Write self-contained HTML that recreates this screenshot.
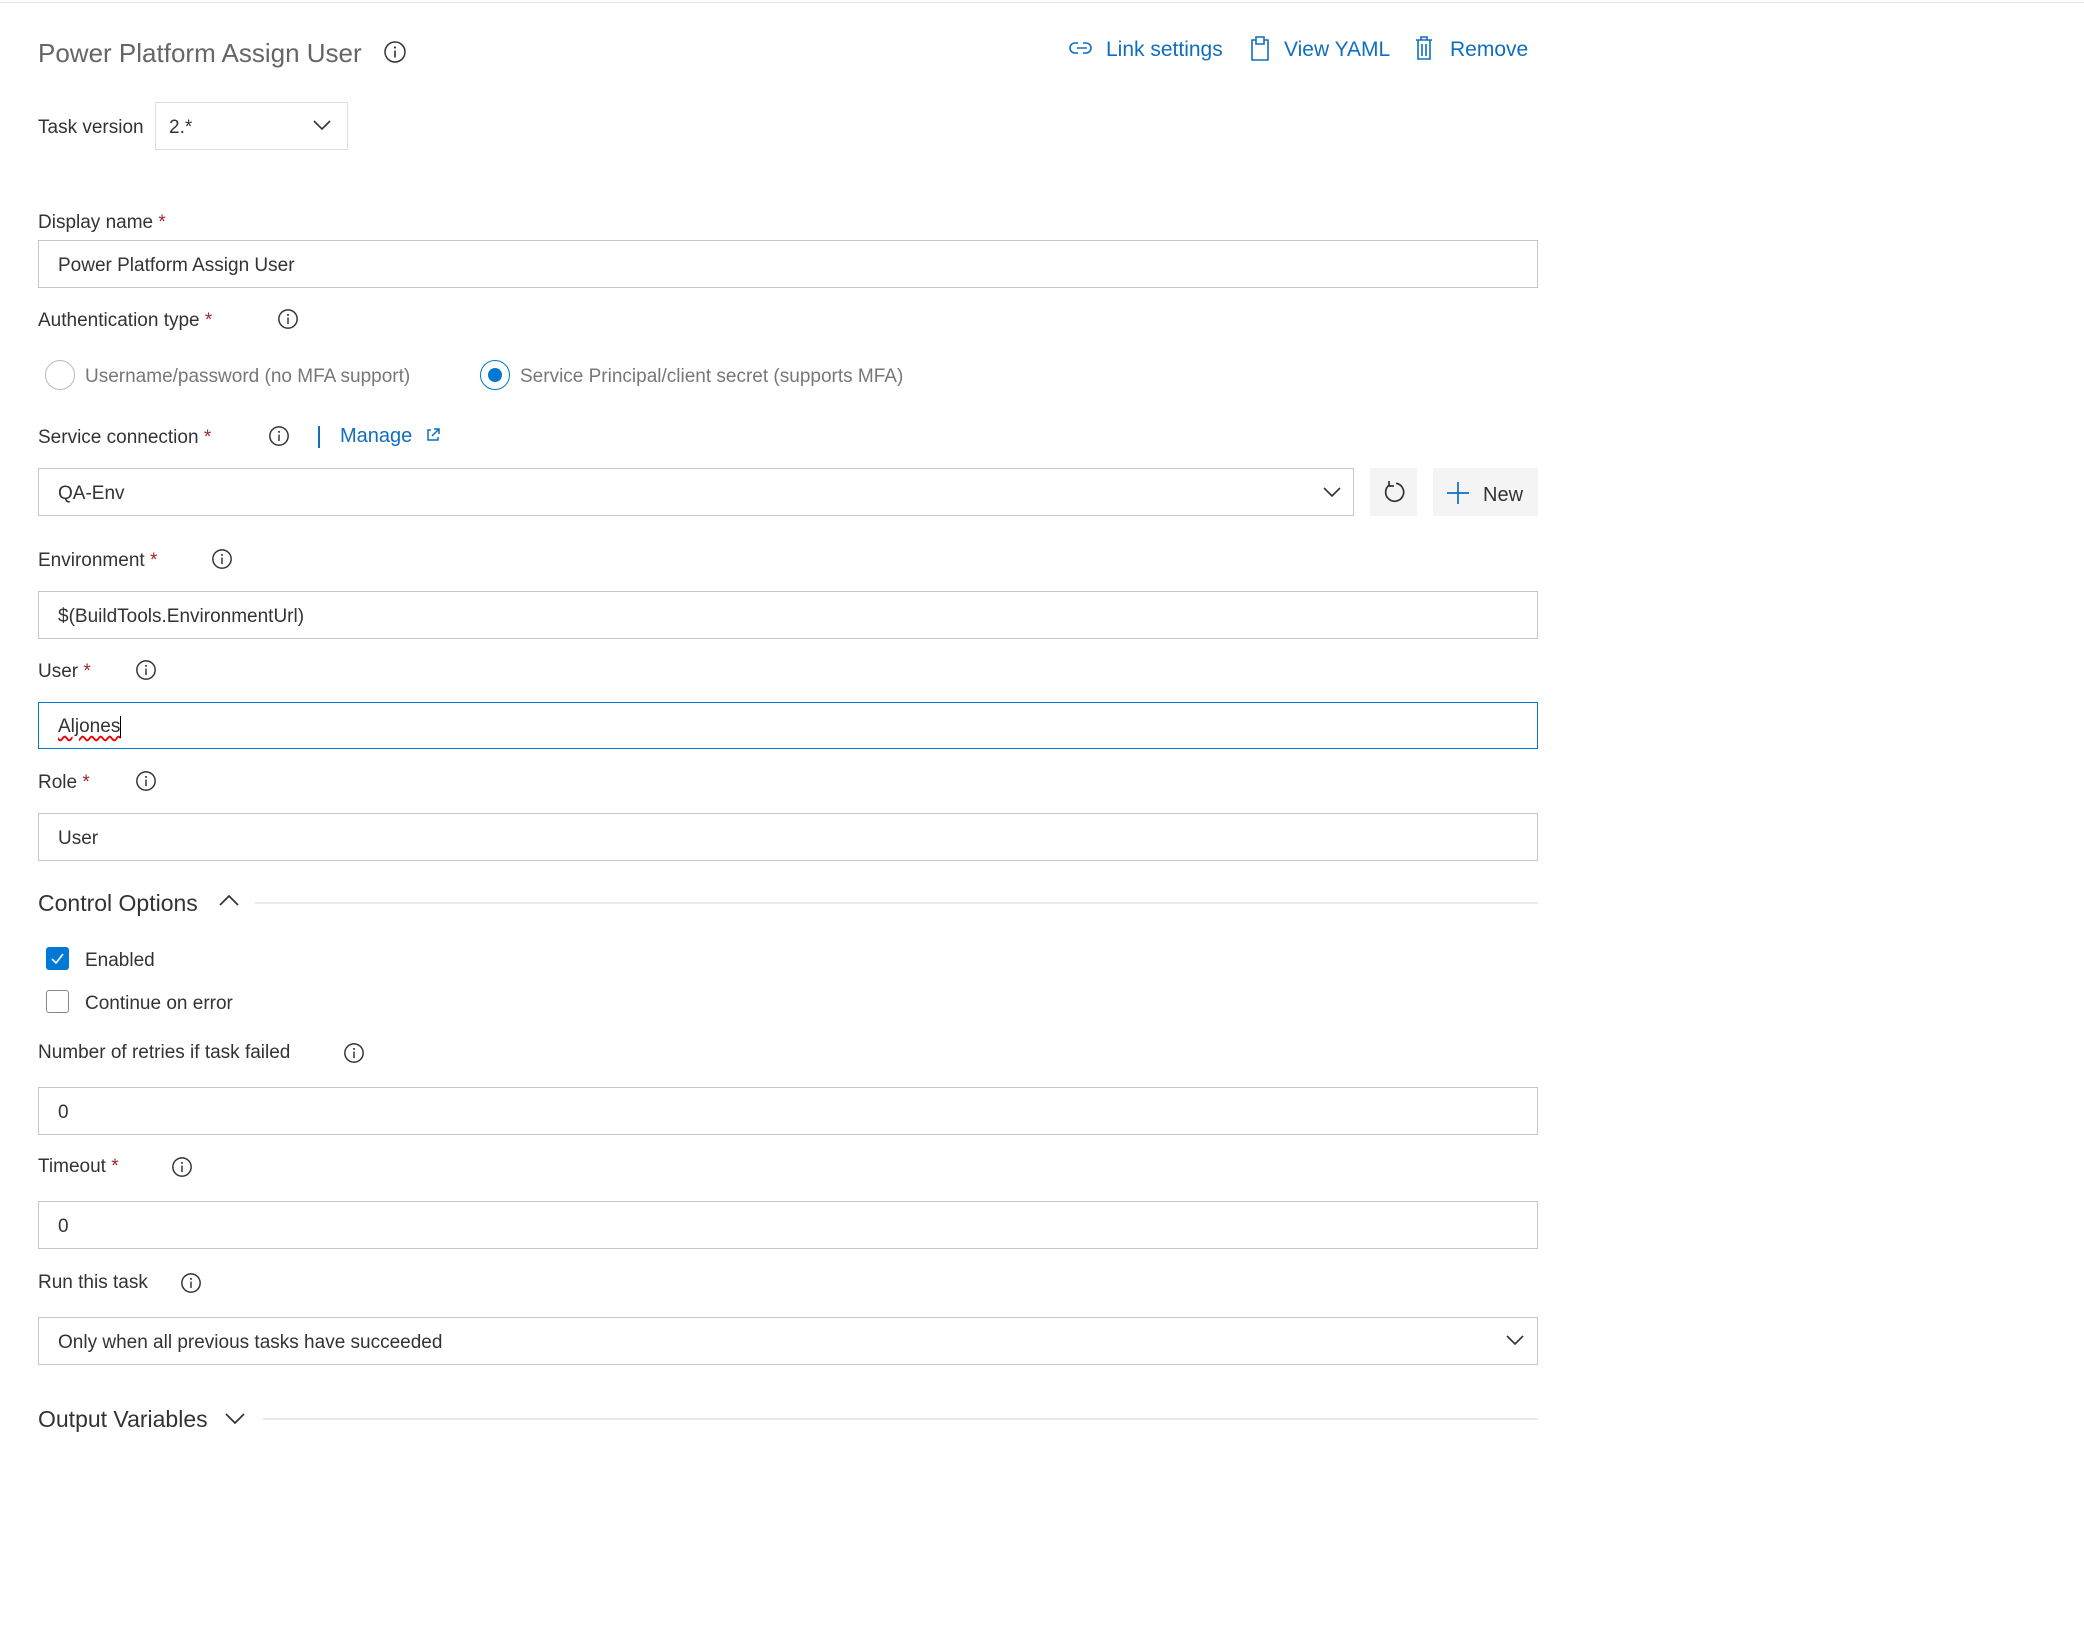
<!DOCTYPE html>
<html><head><meta charset="utf-8"><style>
*{box-sizing:border-box;margin:0;padding:0}
body{width:2084px;height:1630px;background:#fff;position:relative;overflow:hidden;font-family:"Liberation Sans",sans-serif;color:#333;font-size:19px}
.a{position:absolute;white-space:nowrap}
.lbl{position:absolute;line-height:24px;font-size:19px;color:#333;transform:translateY(3px)}
.req{color:#a4262c}
.box{position:absolute;left:38px;width:1500px;border:1.5px solid #c8c8c8;background:#fff;font-size:19px;padding-left:19px;padding-top:3px;display:flex;align-items:center}
.info{position:absolute;width:22px;height:22px}
.link{color:#106ebe;font-size:21px;transform:translateY(3px)}
.hr{position:absolute;height:2px;background:#eaeaea}
</style></head><body>
<div class="a" style="left:0;top:2px;width:2084px;height:1px;background:#e6e6e6"></div>

<div class="a" style="left:38px;top:37px;font-size:26px;color:#666;line-height:32px">Power Platform Assign User</div>
<svg class="info" style="left:383px;top:40px;width:24px;height:24px" viewBox="0 0 24 24"><circle cx="12" cy="12" r="10" fill="none" stroke="#333" stroke-width="1.5"/><circle cx="12" cy="7.5" r="1.1" fill="#333"/><path d="M12 10.5v7" stroke="#333" stroke-width="1.6"/></svg>

<svg class="a" style="left:1069px;top:37px" width="26" height="22" viewBox="0 0 26 22"><path d="M9 6H6a5 5 0 0 0 0 10h3M14 16h3a5 5 0 0 0 0-10h-3M8 11h10" stroke="#106ebe" stroke-width="1.6" fill="none"/></svg>
<div class="a link" style="left:1106px;top:35px">Link settings</div>
<svg class="a" style="left:1249px;top:34px" width="22" height="28" viewBox="0 0 22 28"><path d="M3 6h4v-3h8v3h4v20H3z M7 6v4h8V6" stroke="#106ebe" stroke-width="1.6" fill="none"/></svg>
<div class="a link" style="left:1284px;top:35px">View YAML</div>
<svg class="a" style="left:1414px;top:34px" width="20" height="28" viewBox="0 0 20 28"><path d="M2 6h16M7 6V3h6v3M4 6v19h12V6M8 10v12M12 10v12" stroke="#106ebe" stroke-width="1.6" fill="none"/></svg>
<div class="a link" style="left:1450px;top:35px">Remove</div>

<div class="lbl" style="left:38px;top:113px">Task version</div>
<div class="a" style="left:155px;top:102px;width:193px;height:48px;border:1.5px solid #ddd;padding:14px 0 0 13px;font-size:19px">2.*</div>
<svg class="a" style="left:312px;top:118px" width="20" height="14" viewBox="0 0 20 14"><path d="M2 3l8 8 8-8" stroke="#333" stroke-width="1.6" fill="none"/></svg>

<div class="lbl" style="left:38px;top:208px">Display name <span class="req">*</span></div>
<div class="box" style="top:240px;height:48px">Power Platform Assign User</div>

<div class="lbl" style="left:38px;top:306px">Authentication type <span class="req">*</span></div>
<svg class="info" style="left:277px;top:308px" viewBox="0 0 24 24"><circle cx="12" cy="12" r="10" fill="none" stroke="#333" stroke-width="1.6"/><circle cx="12" cy="7.5" r="1.1" fill="#333"/><path d="M12 10.5v7" stroke="#333" stroke-width="1.6"/></svg>

<div class="a" style="left:45px;top:360px;width:30px;height:30px;border:1.5px solid #bbb;border-radius:50%"></div>
<div class="a" style="left:85px;top:366px;color:#777;font-size:19px">Username/password (no MFA support)</div>
<div class="a" style="left:480px;top:360px;width:30px;height:30px;border:1.5px solid #0078d4;border-radius:50%"></div>
<div class="a" style="left:488px;top:368px;width:14px;height:14px;background:#0078d4;border-radius:50%"></div>
<div class="a" style="left:520px;top:366px;color:#777;font-size:19px">Service Principal/client secret (supports MFA)</div>

<div class="lbl" style="left:38px;top:423px">Service connection <span class="req">*</span></div>
<svg class="info" style="left:268px;top:425px" viewBox="0 0 24 24"><circle cx="12" cy="12" r="10" fill="none" stroke="#333" stroke-width="1.6"/><circle cx="12" cy="7.5" r="1.1" fill="#333"/><path d="M12 10.5v7" stroke="#333" stroke-width="1.6"/></svg>
<div class="a" style="left:318px;top:426px;width:2px;height:22px;background:#106ebe"></div>
<div class="a link" style="left:340px;top:422px;font-size:20px">Manage</div>
<svg class="a" style="left:425px;top:427px" width="16" height="16" viewBox="0 0 16 16"><path d="M6 3H3v10h10v-3M9 2h5v5M14 2L7 9" stroke="#106ebe" stroke-width="1.5" fill="none"/></svg>

<div class="box" style="top:468px;width:1316px;height:48px">QA-Env</div>
<svg class="a" style="left:1322px;top:485px" width="20" height="14" viewBox="0 0 20 14"><path d="M2 3l8 8 8-8" stroke="#333" stroke-width="1.6" fill="none"/></svg>
<div class="a" style="left:1370px;top:468px;width:47px;height:48px;background:#f4f4f4"></div>
<svg class="a" style="left:1380px;top:478px" width="28" height="28" viewBox="0 0 28 28"><path d="M10 6.5A9 9 0 1 0 16 5.3" stroke="#333" stroke-width="1.7" fill="none"/><path d="M9 3v5h5" stroke="#333" stroke-width="1.7" fill="none"/></svg>
<div class="a" style="left:1433px;top:468px;width:105px;height:48px;background:#f4f4f4"></div>
<svg class="a" style="left:1446px;top:481px" width="24" height="24" viewBox="0 0 24 24"><path d="M12 1v22M1 12h22" stroke="#106ebe" stroke-width="1.7"/></svg>
<div class="a" style="left:1483px;top:484px;font-size:20px">New</div>

<div class="lbl" style="left:38px;top:546px">Environment <span class="req">*</span></div>
<svg class="info" style="left:211px;top:548px" viewBox="0 0 24 24"><circle cx="12" cy="12" r="10" fill="none" stroke="#333" stroke-width="1.6"/><circle cx="12" cy="7.5" r="1.1" fill="#333"/><path d="M12 10.5v7" stroke="#333" stroke-width="1.6"/></svg>
<div class="box" style="top:591px;height:48px">$(BuildTools.EnvironmentUrl)</div>

<div class="lbl" style="left:38px;top:657px">User <span class="req">*</span></div>
<svg class="info" style="left:135px;top:659px" viewBox="0 0 24 24"><circle cx="12" cy="12" r="10" fill="none" stroke="#333" stroke-width="1.6"/><circle cx="12" cy="7.5" r="1.1" fill="#333"/><path d="M12 10.5v7" stroke="#333" stroke-width="1.6"/></svg>
<div class="box" style="top:702px;height:47px;border-color:#0078d4"><span style="text-decoration:underline wavy #e00;text-underline-offset:3px">Aljones</span><span style="display:inline-block;width:1px;height:22px;background:#000"></span></div>

<div class="lbl" style="left:38px;top:768px">Role <span class="req">*</span></div>
<svg class="info" style="left:135px;top:770px" viewBox="0 0 24 24"><circle cx="12" cy="12" r="10" fill="none" stroke="#333" stroke-width="1.6"/><circle cx="12" cy="7.5" r="1.1" fill="#333"/><path d="M12 10.5v7" stroke="#333" stroke-width="1.6"/></svg>
<div class="box" style="top:813px;height:48px">User</div>

<div class="a" style="left:38px;top:889px;font-size:23px;line-height:28px">Control Options</div>
<svg class="a" style="left:218px;top:894px" width="22" height="14" viewBox="0 0 22 14"><path d="M2 11l9-9 9 9" stroke="#333" stroke-width="1.7" fill="none"/></svg>
<div class="hr" style="left:255px;top:902px;width:1283px"></div>

<div class="a" style="left:46px;top:947px;width:23px;height:23px;background:#0078d4;border-radius:3px"></div>
<svg class="a" style="left:49px;top:950px" width="17" height="17" viewBox="0 0 17 17"><path d="M3 9l4 4 7-9" stroke="#fff" stroke-width="1.6" fill="none"/></svg>
<div class="a" style="left:85px;top:950px">Enabled</div>
<div class="a" style="left:46px;top:990px;width:23px;height:23px;border:1.5px solid #888;border-radius:3px"></div>
<div class="a" style="left:85px;top:993px">Continue on error</div>

<div class="lbl" style="left:38px;top:1038px">Number of retries if task failed</div>
<svg class="info" style="left:343px;top:1042px" viewBox="0 0 24 24"><circle cx="12" cy="12" r="10" fill="none" stroke="#333" stroke-width="1.6"/><circle cx="12" cy="7.5" r="1.1" fill="#333"/><path d="M12 10.5v7" stroke="#333" stroke-width="1.6"/></svg>
<div class="box" style="top:1087px;height:48px">0</div>

<div class="lbl" style="left:38px;top:1152px">Timeout <span class="req">*</span></div>
<svg class="info" style="left:171px;top:1156px" viewBox="0 0 24 24"><circle cx="12" cy="12" r="10" fill="none" stroke="#333" stroke-width="1.6"/><circle cx="12" cy="7.5" r="1.1" fill="#333"/><path d="M12 10.5v7" stroke="#333" stroke-width="1.6"/></svg>
<div class="box" style="top:1201px;height:48px">0</div>

<div class="lbl" style="left:38px;top:1268px">Run this task</div>
<svg class="info" style="left:180px;top:1272px" viewBox="0 0 24 24"><circle cx="12" cy="12" r="10" fill="none" stroke="#333" stroke-width="1.6"/><circle cx="12" cy="7.5" r="1.1" fill="#333"/><path d="M12 10.5v7" stroke="#333" stroke-width="1.6"/></svg>
<div class="box" style="top:1317px;height:48px">Only when all previous tasks have succeeded</div>
<svg class="a" style="left:1505px;top:1333px" width="20" height="14" viewBox="0 0 20 14"><path d="M2 3l8 8 8-8" stroke="#333" stroke-width="1.6" fill="none"/></svg>

<div class="a" style="left:38px;top:1405px;font-size:23px;line-height:28px">Output Variables</div>
<svg class="a" style="left:224px;top:1411px" width="22" height="14" viewBox="0 0 22 14"><path d="M2 3l9 9 9-9" stroke="#333" stroke-width="1.7" fill="none"/></svg>
<div class="hr" style="left:263px;top:1418px;width:1275px"></div>
</body></html>
